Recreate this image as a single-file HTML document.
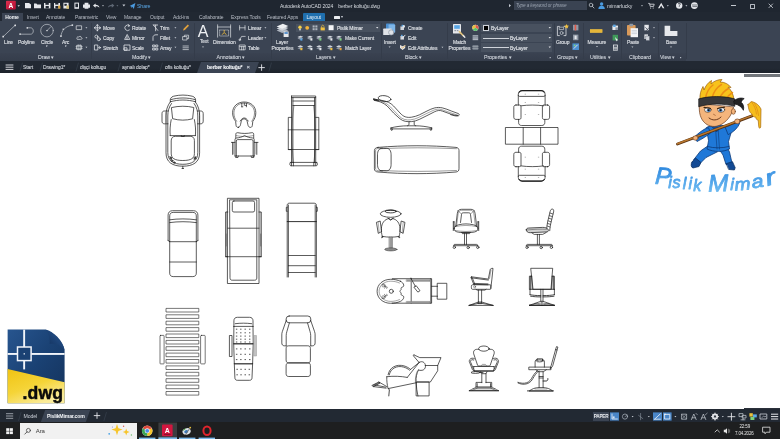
<!DOCTYPE html>
<html lang="tr">
<head>
<meta charset="utf-8">
<title>Autodesk AutoCAD 2024 - berber koltuğu.dwg</title>
<style>
html,body{margin:0;padding:0;background:#fff;}
body{width:780px;height:439px;overflow:hidden;position:relative;font-family:"Liberation Sans",sans-serif;}
#app{position:absolute;left:0;top:0;width:780px;height:439px;overflow:hidden;background:#fff;}
.abs{position:absolute;}
.t{position:absolute;white-space:nowrap;color:#d4d8de;font-size:5px;line-height:6px;letter-spacing:-0.1px;}
#titlebar{left:0;top:0;width:780px;height:12px;background:#1f2630;}
#tabrow{left:0;top:12px;width:780px;height:9px;background:#212832;}
#ribbon{left:0;top:21px;width:780px;height:40px;background:#3b4453;}
#ribbonlabels{left:0;top:53px;width:686px;height:8px;background:linear-gradient(#3a4251,#353d4b);}
#filetabs{left:0;top:61px;width:780px;height:12px;background:#222933;}
#canvas{left:0;top:73px;width:780px;height:336px;background:#fff;}
#layoutbar{left:0;top:409px;width:780px;height:13px;background:#222933;}
#taskbar{left:0;top:422px;width:780px;height:17px;background:#1e1f20;}
.sep{position:absolute;top:23px;width:1px;height:36px;background:#343c4a;}
.lbl{top:54px;color:#cdd2d9;font-size:5.3px;}
.tab{top:14px;color:#b9bec7;}
.ft{top:64px;color:#d0d4da;}
.rb{color:#dde0e5;-webkit-text-stroke:0.120px #dde0e5;}
.lbl,.ft{-webkit-text-stroke:0.100px currentColor;}
.t,svg{filter:blur(0.300px);}
#dw{filter:none;}
</style>
</head>
<body>
<div id="app">
<div id="titlebar" class="abs"></div>
<div id="tabrow" class="abs"></div>
<div id="ribbon" class="abs"></div>
<div id="ribbonlabels" class="abs"></div>
<div id="filetabs" class="abs"></div>
<div id="canvas" class="abs"></div>
<div id="layoutbar" class="abs"></div>
<div id="taskbar" class="abs"></div>

<!-- CHROME-TEXT -->
<div class="sep" style="left:91px;"></div><div class="sep" style="left:193.5px;"></div><div class="sep" style="left:270.5px;"></div><div class="sep" style="left:380.5px;"></div><div class="sep" style="left:446.5px;"></div><div class="sep" style="left:553.5px;"></div><div class="sep" style="left:583px;"></div><div class="sep" style="left:621px;"></div><div class="sep" style="left:658px;"></div><div class="sep" style="left:686px;"></div>
<div class="abs" style="left:744px;top:73.6px;width:36px;height:3.2px;background:#72767b;"></div>
<div class="abs" style="left:0;top:68px;width:780px;height:5px;background:linear-gradient(rgba(26,31,39,0),rgba(26,31,39,.7));"></div>
<!-- title bar text -->
<div class="t" style="left:137px;top:3px;color:#5aa7e6;font-size:5.2px;">Share</div>
<div class="t" style="left:280px;top:3px;color:#d8dce2;font-size:5px;">Autodesk AutoCAD 2024</div>
<div class="t" style="left:338.300px;top:3px;color:#d8dce2;font-size:5.100px;">berber koltuğu.dwg</div>
<div class="abs" style="left:514px;top:1px;width:73px;height:9px;background:#3a4352;"></div>
<div class="t" style="left:516px;top:3px;color:#9aa3b0;font-size:4.6px;font-style:italic;">Type a keyword or phrase</div>
<div class="t" style="left:607px;top:3px;color:#d8dce2;font-size:5.2px;">mimarlucky</div>
<div class="abs" style="left:731px;top:5.3px;width:4.6px;height:0.8px;background:#c4c8cf;"></div>
<svg class="abs" style="left:768px;top:3px;" width="6" height="6" viewBox="0 0 6 6"><path d="M0.700 0.700l4.200 4.200M4.900 0.700l-4.200 4.200" stroke="#d4d8de" stroke-width="0.800" fill="none"/></svg>
<div class="abs" style="left:750.3px;top:3.8px;width:2.8px;height:3px;border:0.6px solid #b4b9c1;border-radius:0.5px;"></div>

<!-- ribbon tabs -->
<div class="abs" style="left:2px;top:12.500px;width:21px;height:9.500px;background:#3b4453;"></div>
<div class="t tab" style="left:5.200px;color:#f2f4f7;font-weight:bold;font-size:5px;">Home</div>
<div class="t tab" style="left:27px;">Insert</div>
<div class="t tab" style="left:46px;">Annotate</div>
<div class="t tab" style="left:75px;">Parametric</div>
<div class="t tab" style="left:106px;">View</div>
<div class="t tab" style="left:124px;">Manage</div>
<div class="t tab" style="left:150px;">Output</div>
<div class="t tab" style="left:173px;">Add-ins</div>
<div class="t tab" style="left:199px;">Collaborate</div>
<div class="t tab" style="left:231px;">Express Tools</div>
<div class="t tab" style="left:267px;">Featured Apps</div>
<div class="abs" style="left:303px;top:12.5px;width:22px;height:8.5px;background:#1f6fae;border-radius:1px 1px 0 0;"></div>
<div class="t tab" style="left:306.5px;color:#eaf2fa;">Layout</div>
<div class="abs" style="left:334px;top:15.5px;width:6px;height:3px;background:#e8ebef;border-radius:0.5px;"></div>
<div class="t" style="left:341px;top:14px;font-size:4px;color:#cfd3da;">▾</div>

<!-- ribbon panel labels -->
<div class="t lbl" style="left:38px;">Draw ▾</div>
<div class="t lbl" style="left:132px;">Modify ▾</div>
<div class="t lbl" style="left:216.500px;">Annotation ▾</div>
<div class="t lbl" style="left:316px;">Layers ▾</div>
<div class="t lbl" style="left:405px;">Block ▾</div>
<div class="t lbl" style="left:484px;">Properties ▾</div>
<div class="t lbl" style="left:557px;">Groups ▾</div>
<div class="t lbl" style="left:590px;">Utilities ▾</div>
<div class="t lbl" style="left:629px;">Clipboard</div>
<div class="t lbl" style="left:660px;">View ▾</div>

<!-- ribbon button text : Draw -->
<div class="t rb" style="left:4px;top:38.8px;">Line</div>
<div class="t rb" style="left:18px;top:38.8px;">Polyline</div>
<div class="t rb" style="left:41px;top:38.8px;">Circle</div>
<div class="t rb" style="left:62px;top:38.8px;">Arc</div>
<div class="t rb" style="left:46px;top:43px;font-size:3px;">▾</div>
<div class="t rb" style="left:64.5px;top:43px;font-size:3px;">▾</div>
<!-- Modify -->
<div class="t rb" style="left:103px;top:24.5px;">Move</div>
<div class="t rb" style="left:103px;top:34.5px;">Copy</div>
<div class="t rb" style="left:103px;top:44.500px;">Stretch</div>
<div class="t rb" style="left:132px;top:24.5px;">Rotate</div>
<div class="t rb" style="left:132px;top:34.5px;">Mirror</div>
<div class="t rb" style="left:132px;top:44.500px;">Scale</div>
<div class="t rb" style="left:160px;top:24.5px;">Trim</div>
<div class="t rb" style="left:160px;top:34.5px;">Fillet</div>
<div class="t rb" style="left:160px;top:44.500px;">Array</div>
<!-- Annotation -->
<div class="t rb" style="left:200px;top:38.800px;font-size:4.800px;">Text</div>
<div class="t rb" style="left:213px;top:38.8px;">Dimension</div>
<div class="t rb" style="left:248px;top:24.5px;">Linear</div>
<div class="t rb" style="left:248px;top:34.5px;">Leader</div>
<div class="t rb" style="left:248px;top:44.500px;">Table</div>
<!-- Layers -->
<div class="t rb" style="left:276px;top:38.8px;">Layer</div>
<div class="t rb" style="left:271.5px;top:44.500px;">Properties</div>
<div class="abs" style="left:296px;top:23.5px;width:84px;height:8.5px;background:#48515f;"></div>
<div class="t rb" style="left:337px;top:24.5px;color:#e4e7eb;">Pislik Mimar</div>
<div class="t rb" style="left:345px;top:34.5px;">Make Current</div>
<div class="t rb" style="left:345px;top:44.500px;">Match Layer</div>
<!-- Block -->
<div class="t rb" style="left:384px;top:38.8px;">Insert</div>
<div class="t rb" style="left:408px;top:24.5px;">Create</div>
<div class="t rb" style="left:408px;top:34.5px;">Edit</div>
<div class="t rb" style="left:408px;top:44.500px;">Edit Attributes</div>
<!-- Properties -->
<div class="t rb" style="left:453px;top:38.8px;">Match</div>
<div class="t rb" style="left:448.5px;top:44.500px;">Properties</div>
<div class="abs" style="left:481px;top:23.5px;width:71px;height:8.5px;background:#48515f;"></div>
<div class="abs" style="left:481px;top:33.5px;width:71px;height:8.5px;background:#48515f;"></div>
<div class="abs" style="left:481px;top:43px;width:71px;height:8.5px;background:#48515f;"></div>
<div class="abs" style="left:483px;top:25px;width:5.5px;height:5.5px;background:#000;border:0.5px solid #cfd3da;box-sizing:border-box;"></div>
<div class="t rb" style="left:491px;top:24.5px;color:#e4e7eb;">ByLayer</div>
<div class="abs" style="left:483px;top:37.5px;width:26px;height:0.7px;background:#cfd3da;"></div>
<div class="t rb" style="left:510px;top:34.5px;color:#e4e7eb;">ByLayer</div>
<div class="abs" style="left:483px;top:47px;width:26px;height:0.7px;background:#cfd3da;"></div>
<div class="t rb" style="left:510px;top:44.500px;color:#e4e7eb;">ByLayer</div>
<!-- Groups / Utilities / Clipboard / View -->
<div class="t rb" style="left:556px;top:38.8px;">Group</div>
<div class="t rb" style="left:587.5px;top:38.8px;">Measure</div>
<div class="t rb" style="left:627px;top:38.8px;">Paste</div>
<div class="t rb" style="left:666px;top:38.8px;">Base</div>

<!-- file tabs -->
<div class="t ft" style="left:23px;">Start</div>
<div class="t ft" style="left:43px;">Drawing1*</div>
<div class="t ft" style="left:80px;">dişçi koltugu</div>
<div class="t ft" style="left:122px;">aynalı dolap*</div>
<div class="t ft" style="left:165px;">ofis koltuğu*</div>
<div class="abs" style="left:199px;top:62px;width:58px;height:11px;background:#3b4453;transform:skewX(-20deg);"></div>
<div class="t ft" style="left:207px;color:#f2f4f7;font-weight:bold;">berber koltuğu*</div>
<div class="t ft" style="left:246.5px;top:63.5px;font-size:6px;color:#c9ced6;">×</div>
<svg class="abs" style="left:257px;top:63px;" width="10" height="10" viewBox="0 0 10 10"><path d="M4.600 1.400v6.400M1.400 4.600h6.400" stroke="#e6e8ec" stroke-width="0.900" fill="none"/></svg>

<!-- layout bar text -->
<div class="t" style="left:23.5px;top:413px;color:#c9ced6;font-size:5.2px;">Model</div>
<div class="abs" style="left:43px;top:410px;width:45px;height:12px;background:#3b4453;transform:skewX(-20deg);"></div>
<div class="t" style="left:47px;top:413px;color:#f2f4f7;font-weight:bold;font-size:5.2px;letter-spacing:-0.2px;">PislikMimar.com</div>
<svg class="abs" style="left:92px;top:411px;" width="10" height="10" viewBox="0 0 10 10"><path d="M5 1.400v6.400M1.800 4.600h6.400" stroke="#e6e8ec" stroke-width="0.900" fill="none"/></svg>
<div class="abs" style="left:592.600px;top:412.400px;width:16.400px;height:8.200px;background:#3b4453;"></div>
<div class="t" style="left:593.800px;top:413.700px;font-size:4.700px;color:#eceef1;font-weight:bold;letter-spacing:-0.250px;">PAPER</div>

<!-- taskbar text -->
<div class="abs" style="left:19.5px;top:423px;width:117.5px;height:16px;background:#f1f1f1;"></div>
<div class="t" style="left:35.8px;top:428px;color:#3a3a3a;font-size:6px;">Ara</div>
<div class="t" style="left:739.5px;top:423.8px;color:#e6e6e6;font-size:4.5px;letter-spacing:-0.15px;">22:59</div>
<div class="t" style="left:735px;top:430.8px;color:#e6e6e6;font-size:4.5px;letter-spacing:-0.15px;">7.04.2026</div>
<div class="abs" style="left:744px;top:407.800px;width:36px;height:1.400px;background:#2b313b;"></div>
<!-- /CHROME-TEXT -->

<!-- CHROME-ICONS -->
<svg class="abs" style="left:0;top:0;" width="780" height="73" viewBox="0 0 780 73" fill="none" stroke-linecap="round" stroke-linejoin="round">
<!-- App logo -->
<defs>
<linearGradient id="gA" x1="0" y1="0" x2="1" y2="1"><stop offset="0" stop-color="#e0304f"/><stop offset="1" stop-color="#b10c33"/></linearGradient>
</defs>
<rect x="6" y="0.800" width="9.800" height="8.600" rx="0.800" fill="url(#gA)"/>
<text x="10.900" y="7.600" font-family="Liberation Sans, sans-serif" font-weight="bold" font-size="6.600" fill="#fff" text-anchor="middle">A</text>
<path d="M17.5 5.2h2.4l-1.2 1.5z" fill="#dfe2e7"/>
<!-- quick access -->
<g fill="#e6e8ec">
<path d="M25 3h4l2 1.6V8.2h-6z"/>
<path d="M34 3.6h2.4l.8.9H41V8.2h-7z"/>
<path d="M44 3h6.4v5.4H44z"/>
<path d="M54 3h6v5.4h-6z"/>
<path d="M63.4 2.8h5.2v5.8h-5.2z"/>
<path d="M74.4 2.6h4.6v6.2h-4.6z"/>
<path d="M83 4.4h7v3.4h-7zM84.6 2.8h3.8v1.6h-3.8zM84.6 7h3.8v1.8h-3.8z"/>
</g>
<g fill="#222933">
<rect x="45.4" y="3" width="3.4" height="1.8"/><rect x="45.6" y="6" width="3.2" height="2.4"/>
<rect x="55.2" y="3" width="3.2" height="1.6"/><rect x="55.4" y="6" width="3" height="2.4"/>
<rect x="75.4" y="3.6" width="2.6" height="3.6"/>
<rect x="64.4" y="3.8" width="2.4" height="2"/>
</g>
<rect x="58.2" y="5.6" width="2.2" height="3" fill="#d9a23a"/>
<rect x="66.4" y="5.4" width="2.6" height="3.4" fill="#d8c27a"/>
<path d="M93 5.6l2.6-2.2v1.4c2 0 3.6.8 3.8 3-1-1.2-2.2-1.5-3.8-1.5v1.5z" fill="#e6e8ec"/>
<path d="M102 5.2h2l-1 1.3z" fill="#c9ced6"/>
<path d="M114.4 5.6l-2.6-2.2v1.4c-2 0-3.6.8-3.8 3 1-1.2 2.2-1.5 3.8-1.5v1.5z" fill="#5f6875"/>
<path d="M116.4 5.2h2l-1 1.3z" fill="#6d7683"/>
<path d="M122.4 4.6h3l-1.5 2z" fill="#c9ced6"/>
<path d="M129.6 6l5.8-3-1.6 6-1.5-2.2-1 1.2v-1.6z" fill="#4b9be0"/>
<!-- search / user icons -->
<path d="M509 4l2 1.6-2 1.6z" fill="#c9ced6"/>
<circle cx="591" cy="5" r="1.8" stroke="#c9ced6" stroke-width="0.7"/><path d="M592.4 6.4l1.6 1.6" stroke="#c9ced6" stroke-width="0.8"/>
<circle cx="601.6" cy="4" r="1.7" fill="#4b9be0"/><path d="M598.4 9c0-2.4 1.4-3.2 3.2-3.2s3.2.8 3.2 3.2z" fill="#4b9be0"/>
<path d="M641 5.2h2l-1 1.3z" fill="#c9ced6"/>
<path d="M648.6 3.4h1l.6 3h3.4l.6-2.2h-4" stroke="#dfe2e7" stroke-width="0.8"/><circle cx="650.6" cy="8" r="0.6" fill="#dfe2e7"/><circle cx="653.2" cy="8" r="0.6" fill="#dfe2e7"/>
<path d="M658 8.2l3.2-5.4 3.2 5.4h-1.6l-1.6-2.8-1.6 2.8z" fill="#e6e8ec"/>
<path d="M666.8 5.2h2l-1 1.3z" fill="#c9ced6"/>
<circle cx="679.2" cy="5.6" r="3.2" fill="#e6e8ec"/>
<text x="679.2" y="7.4" font-family="Liberation Sans, sans-serif" font-weight="bold" font-size="5" fill="#222933" text-anchor="middle">?</text>
<path d="M685.4 5.2h2l-1 1.3z" fill="#c9ced6"/>
<circle cx="694.4" cy="5.6" r="3.4" fill="#e6e8ec"/><path d="M692.4 5h4.4M692.8 6.6h4" stroke="#222933" stroke-width="0.6"/>

<!-- DRAW panel -->
<g stroke="#c9cdd4" stroke-width="0.650">
<path d="M3.2 36.6L15 25.4"/>
<path d="M20 34.2h10.6c3.6 0 3.6-6.4 0-6.4h-3.4"/>
<circle cx="47" cy="30.6" r="6.3"/>
<path d="M47 30.6l4-4"/>
<path d="M61 36c.4-5.6 4.6-10 11.2-10.8"/>
</g>
<g fill="#dfe2e7">
<rect x="2.4" y="35.8" width="1.6" height="1.6"/><rect x="14.4" y="24.6" width="1.6" height="1.6"/>
<rect x="19.4" y="33.4" width="1.4" height="1.4"/><rect x="26.6" y="27.2" width="1.4" height="1.4"/>
<rect x="60.2" y="35.4" width="1.5" height="1.5"/><rect x="71.6" y="24.4" width="1.5" height="1.5"/><rect x="62.6" y="28.6" width="1.3" height="1.3"/>
<rect x="46.4" y="30" width="1.2" height="1.2"/>
</g>
<g stroke="#dfe2e7" stroke-width="0.7">
<rect x="76.6" y="25.8" width="5" height="3.8"/>
<path d="M77 39c-1-1.6 1-2.8 1.8-1.8.4-1.4 2.6-1 2.4.4 1.4.2 1 2-.2 1.8z"/>
<rect x="77" y="45.4" width="4.4" height="4"/><path d="M76 46.6h6.4M76 48.4h6.4M78.2 44.6v5.6M80.2 44.6v5.6" stroke-width="0.5"/>
</g>
<g fill="#c9ced6">
<path d="M85.4 27.2h2l-1 1.3zM85.4 37.2h2l-1 1.3zM85.4 46.8h2l-1 1.3z"/>
</g>

<!-- MODIFY panel icons -->
<g stroke="#dfe2e7" stroke-width="0.8">
<path d="M97.4 24.8v6M94.4 27.8h6M97.4 24.8l-1 1.1M97.4 24.8l1 1.1M97.4 30.8l-1-1.1M97.4 30.8l1-1.1M94.4 27.8l1.1-1M94.4 27.8l1.1 1M100.4 27.8l-1.1-1M100.4 27.8l-1.1 1"/>
<circle cx="96.4" cy="36.6" r="1.5"/><circle cx="98.8" cy="39.2" r="1.5"/>
<rect x="94.8" y="45" width="3" height="5"/><path d="M98.6 47.6h2M99.6 46.6l1 1-1 1"/>
<path d="M129.4 25.6a2.8 2.8 0 1 0 0 4.4M128.6 24.6l1 1.2-1.4.6"/>
<path d="M127 34.8l-2.4 4.6h4.8zM127 36.4v3"/>
<rect x="124.4" y="45" width="5.6" height="5.2"/><rect x="124.4" y="47.8" width="2.6" height="2.4"/>
<path d="M153.4 25l4.4 5.4M157.6 25h-4.2M155.6 25.2v5.6"/>
<path d="M153 40.4v-3c0-1.6 1.2-2.6 3-2.6h1.6"/>
<rect x="153" y="45" width="1.8" height="1.8"/><rect x="156" y="45" width="1.8" height="1.8"/><rect x="153" y="48.2" width="1.8" height="1.8"/><rect x="156" y="48.2" width="1.8" height="1.8"/>
</g>
<g fill="#c9ced6">
<path d="M174.4 27.2h2l-1 1.3zM174.4 37.2h2l-1 1.3zM174.4 46.8h2l-1 1.3z"/>
</g>
<path d="M183 30.4l.6-1.6 4.2-4.2 1.2 1.2-4.2 4.2z" fill="#e2a23c"/>
<g stroke="#dfe2e7" stroke-width="0.7">
<rect x="183" y="36.6" width="4" height="3.4"/><path d="M184.4 36.6v-1.4h4.2v3.4h-1.6"/>
<path d="M183 46h5.4M183 47.8h5.4M183 49.6h5.4"/>
</g>

<!-- ANNOTATION -->
<text x="203.200" y="36.800" font-family="Liberation Sans, sans-serif" font-size="16" fill="#eef0f3" text-anchor="middle">A</text>
<path d="M202 46.400h2l-1 1.300z" fill="#c9ced6"/>
<g stroke="#dfe2e7" stroke-width="0.7">
<path d="M217.6 24.8v12.4M230.6 24.8v12.4M217.6 27h13"/>
<rect x="219.6" y="30" width="9" height="6" stroke-dasharray="1 0.8" stroke-width="0.5"/>
</g>
<path d="M222.4 34.4l1.8-2 1.8 2M224.2 31.4v-1" stroke="#f0c040" stroke-width="0.9"/>
<g stroke="#dfe2e7" stroke-width="0.7">
<path d="M239.6 25.6v4.4M245 25.6v4.4M239.6 27.8h5.4"/>
<path d="M239.6 40l2-3.6h3.6"/><circle cx="239.8" cy="39.8" r="0.8"/>
<rect x="239.6" y="45" width="5.6" height="4.8"/><path d="M239.6 46.6h5.6M241.6 46.6v3.2M243.4 46.6v3.2"/>
</g>
<g fill="#c9ced6"><path d="M264.4 27.2h2l-1 1.3zM264.4 37.2h2l-1 1.3z"/></g>

<!-- LAYERS -->
<g>
<path d="M276.6 30.6l6.2-2.6 5.6 2.2-6.2 2.8z" fill="#aeb5bf"/>
<path d="M276.6 28.4l6.2-2.6 5.6 2.2-6.2 2.8z" fill="#cfd3da"/>
<path d="M276.6 26.4l6.2-2.6 5.6 2.2-6.2 2.8z" fill="#eef0f3"/>
<rect x="283.6" y="31.4" width="5" height="5.6" fill="#e6e8ec"/><rect x="284.4" y="32.2" width="3.4" height="1.6" fill="#3d7fc4"/>
</g>
<circle cx="300" cy="27.2" r="1.7" fill="#f3cf4a"/><rect x="299.2" y="28.8" width="1.6" height="1.6" fill="#cfd3da"/>
<circle cx="307.2" cy="27.8" r="1.9" fill="#f2b23a"/>
<rect x="312.6" y="25.4" width="4.8" height="4.8" fill="#aeb5bf"/><path d="M312.6 27.8h4.8M315 25.4v4.8" stroke="#3b4453" stroke-width="0.6"/>
<rect x="320.6" y="27.4" width="4.2" height="3" fill="#f0c040"/><path d="M321.6 27.4v-1c0-1.6 2.4-1.6 2.4 0" stroke="#f0c040" stroke-width="0.7"/>
<rect x="328.6" y="25.2" width="5" height="5" fill="#f4f5f7"/>
<path d="M376 27h2.4l-1.2 1.5z" fill="#dfe2e7"/>
<g fill="#cfd3da">
<path d="M297.4 37l3-1.3 2.8 1.1-3 1.4zM307 37l3-1.3 2.8 1.1-3 1.4zM316.2 37l3-1.3 2.8 1.1-3 1.4zM327 37l3-1.3 2.8 1.1-3 1.4zM336 37l3-1.3 2.8 1.1-3 1.4z"/>
<path d="M297.4 46.6l3-1.3 2.8 1.1-3 1.4zM307 46.6l3-1.3 2.8 1.1-3 1.4zM316.2 46.6l3-1.3 2.8 1.1-3 1.4zM327 46.6l3-1.3 2.8 1.1-3 1.4zM336 46.6l3-1.3 2.8 1.1-3 1.4z"/>
</g>
<g fill="#8f98a5">
<path d="M297.4 38.6l3-1.3 2.8 1.1-3 1.4zM307 38.6l3-1.3 2.8 1.1-3 1.4zM316.2 38.6l3-1.3 2.8 1.1-3 1.4zM327 38.6l3-1.3 2.8 1.1-3 1.4zM336 38.6l3-1.3 2.8 1.1-3 1.4z"/>
<path d="M297.4 48.2l3-1.3 2.8 1.1-3 1.4zM307 48.2l3-1.3 2.8 1.1-3 1.4zM316.2 48.2l3-1.3 2.8 1.1-3 1.4zM327 48.2l3-1.3 2.8 1.1-3 1.4zM336 48.2l3-1.3 2.8 1.1-3 1.4z"/>
</g>
<g>
<rect x="300.4" y="38.4" width="2" height="2.2" fill="#5aa7e6"/><rect x="310.4" y="38.4" width="2" height="2.2" fill="#e6e8ec"/>
<rect x="319.4" y="38.4" width="2" height="2.2" fill="#7bd07b"/><rect x="330.4" y="38.4" width="2" height="2.2" fill="#e6e8ec"/>
<rect x="300.4" y="48" width="2" height="2.2" fill="#f0c040"/><rect x="310.4" y="48" width="2" height="2.2" fill="#e6e8ec"/>
<rect x="319.4" y="48" width="2" height="2.2" fill="#e6e8ec"/><rect x="330.4" y="48" width="2" height="2.2" fill="#f0c040"/>
<rect x="339.6" y="38.4" width="2" height="2.2" fill="#7bd07b"/><rect x="339.6" y="48" width="2" height="2.2" fill="#e2a23c"/>
</g>

<!-- BLOCK -->
<g>
<rect x="386" y="23.6" width="8.6" height="9.4" rx="0.8" fill="#4b8fd0"/>
<rect x="388.6" y="24.6" width="6.6" height="8" rx="0.6" fill="#7db4e6"/>
<rect x="383.2" y="28.6" width="8.6" height="6.4" rx="0.6" fill="#dfe2e7"/>
<circle cx="391.2" cy="32.4" r="2.6" stroke="#8f98a5" stroke-width="0.7" fill="#dfe2e7"/>
<path d="M388.6 46.4h2l-1 1.3z" fill="#c9ced6"/>
</g>
<g>
<rect x="400.4" y="26.4" width="3.6" height="3.6" fill="#cfd3da"/><circle cx="403.6" cy="26.4" r="1.4" fill="#e6e8ec"/><rect x="401.6" y="24.8" width="1.6" height="1.6" fill="#5aa7e6"/>
<rect x="400.4" y="36" width="3.6" height="3.6" fill="#cfd3da"/><path d="M402 38.8l3-3.6" stroke="#e6e8ec" stroke-width="0.9"/><rect x="401" y="34.8" width="1.6" height="1.4" fill="#5aa7e6"/>
<path d="M400 45l2.6 1.2 2.6-1.2v3l-2.6 2-2.6-2z" fill="#e6e8ec"/><path d="M401.6 47.2l1 1 2.4-2.6" stroke="#e2a23c" stroke-width="0.8"/>
<path d="M441.4 46.8h2l-1 1.3z" fill="#c9ced6"/>
</g>

<!-- PROPERTIES -->
<g>
<rect x="453" y="24" width="8" height="9.6" rx="0.6" fill="#e6e8ec"/>
<rect x="454.2" y="25.2" width="5.6" height="3.6" fill="#5aa7e6"/>
<rect x="454.4" y="30" width="1.6" height="1.2" fill="#8f98a5"/><rect x="456.8" y="30" width="1.6" height="1.2" fill="#8f98a5"/>
<path d="M459.4 31.6l4.4 4.6" stroke="#e2c27a" stroke-width="1.6"/><path d="M463.2 35.6l1.6 1.6" stroke="#e6e8ec" stroke-width="1.4"/>
</g>
<circle cx="475.4" cy="27.8" r="3.1" fill="#e6e8ec"/>
<path d="M475.4 27.8V24.7a3.1 3.1 0 0 1 2.7 4.6z" fill="#e05a4a"/><path d="M475.4 27.8l2.7 1.5a3.1 3.1 0 0 1-5.4 0z" fill="#5ac46a"/><path d="M475.4 27.8l-2.7 1.5a3.1 3.1 0 0 1 2.7-4.6z" fill="#e8c23c"/>
<rect x="472.6" y="35.2" width="5.6" height="5" fill="#aeb5bf"/><path d="M472.6 36.6h5.6M472.6 38h5.6" stroke="#3b4453" stroke-width="0.4"/>
<rect x="472.6" y="45" width="5.6" height="5" fill="#6d7683"/><path d="M472.6 46.4h5.6M472.6 48.4h5.6" stroke="#cfd3da" stroke-width="0.4"/>
<g fill="#dfe2e7"><path d="M548.6 27h2.4l-1.2 1.5zM548.6 37h2.4l-1.2 1.5zM548.6 46.6h2.4l-1.2 1.5z"/></g>
<rect x="549.6" y="57" width="1.2" height="1.2" fill="#aeb5bf"/>

<!-- GROUPS -->
<g stroke="#dfe2e7" stroke-width="0.8">
<path d="M559.4 26.4h-2v9.2h2M564 26.4h2v9.2h-2"/>
<circle cx="561.6" cy="33" r="1.5" stroke-width="0.6"/><rect x="559.6" y="27.2" width="4" height="2.4" stroke-width="0.6"/>
</g>
<path d="M566.6 24l.7 1.6 1.7.2-1.3 1.1.4 1.7-1.5-.9-1.5.9.4-1.7-1.3-1.100 1.700-.2z" fill="#f0c040"/>
<g>
<rect x="573" y="24.8" width="5.4" height="5.6" fill="#8f98a5"/><rect x="574.6" y="24.800" width="1.600" height="5.600" fill="#e05a4a"/>
<rect x="573" y="34.6" width="5.4" height="5.6" fill="#8f98a5"/><rect x="574.600" y="35.600" width="2" height="3.600" fill="#e6e8ec"/>
<rect x="572.4" y="43.400" width="6.6" height="6.600" fill="#4b8fd0"/><path d="M574 48.400l3.400-3.400" stroke="#e6e8ec" stroke-width="0.900"/><circle cx="574.600" cy="45.400" r="0.9" fill="#7bd07b"/>
</g>

<!-- UTILITIES -->
<rect x="590" y="29.2" width="12.400" height="3.600" fill="#f0c040"/><path d="M590 31h12.400" stroke="#c79a20" stroke-width="0.5"/>
<path d="M596 46.400h2l-1 1.300z" fill="#c9ced6" transform="translate(0,-0.400) scale(1)"/>
<g>
<rect x="612.400" y="25.600" width="5.600" height="4.400" fill="#e6e8ec"/><rect x="613.200" y="24.600" width="2.400" height="2.400" fill="#5aa7e6"/><rect x="615.400" y="27.400" width="2.600" height="2.600" fill="#8f98a5"/>
<rect x="612.600" y="34.800" width="5.400" height="5.600" fill="#3f9a5a"/><path d="M615 37l3.200 3.200-1.400.2-.6 1.200z" fill="#e6e8ec"/>
<rect x="613" y="44.600" width="4.800" height="6" fill="#e6e8ec"/><rect x="613.800" y="45.400" width="3.200" height="1.400" fill="#3b4453"/><path d="M613.800 48h3.200M613.800 49.400h3.200" stroke="#3b4453" stroke-width="0.600" stroke-dasharray="0.8 0.4"/>
</g>

<!-- CLIPBOARD -->
<g>
<rect x="627" y="25" width="8.600" height="10.600" rx="0.8" fill="#d99a5a"/>
<rect x="629.400" y="23.800" width="3.800" height="2.400" rx="0.6" fill="#8f98a5"/>
<rect x="630.600" y="28.200" width="7.400" height="9" fill="#f4f5f7"/>
<path d="M632 30.400h4.600M632 32h4.600M632 33.600h4.600" stroke="#aeb5bf" stroke-width="0.500"/>
<path d="M631.400 46.400h2l-1 1.300z" fill="#c9ced6"/>
</g>
<g>
<rect x="644.400" y="24.800" width="4.400" height="5.600" fill="#e6e8ec"/><path d="M645.600 27.600l3.600 3.600M649.200 27.600l-3.600 3.600" stroke="#3b4453" stroke-width="0.700"/>
<rect x="644.400" y="34.400" width="3.600" height="4.600" fill="#e6e8ec"/><rect x="646" y="36" width="3.600" height="4.600" fill="#cfd3da" stroke="#3b4453" stroke-width="0.400"/>
<path d="M653 27.200h2l-1 1.300zM653 37.200h2l-1 1.300z" fill="#c9ced6"/>
</g>

<!-- VIEW -->
<path d="M664.600 25.800h5.600v5.200h7.200v5h-12.800z" fill="#e6e8ec"/>
<path d="M670 46.400h2l-1 1.300z" fill="#c9ced6"/>
<rect x="680" y="57" width="1.200" height="1.200" fill="#aeb5bf"/>

<!-- file tab hamburger -->
<path d="M6 65h7M6 67.200h7M6 69.400h7" stroke="#e6e8ec" stroke-width="0.9"/>
<g stroke="#3b4453" stroke-width="0.600">
<path d="M20 71l2.400-8M40 71l2.400-8M76 71l2.400-8M118 71l2.400-8M160 71l2.400-8M269 71l2.400-8"/>
</g>
</svg>
<svg class="abs" style="left:0;top:405px;" width="780" height="34" viewBox="0 405 780 34" fill="none" stroke-linecap="round" stroke-linejoin="round">
<!-- layout hamburger -->
<path d="M6.400 413.700h6.400M6.400 416h6.400M6.400 418.300h6.400" stroke="#c9ced6" stroke-width="0.700"/>
<path d="M18.600 420.500l2.400-8M104 420.500l2.400-8" stroke="#3b4453" stroke-width="0.600"/>
<!-- status icons -->
<rect x="610" y="412.400" width="9" height="8.200" fill="#4a86c8"/>
<path d="M612 414v5h5.400" stroke="#eef3f9" stroke-width="0.8"/><rect x="612.600" y="416.400" width="2" height="2" fill="#cfe0f3"/>
<circle cx="625" cy="416.600" r="2.600" stroke="#aeb5bf" stroke-width="0.7"/><path d="M625 416.600l2.400-1.400" stroke="#aeb5bf" stroke-width="0.600"/>
<path d="M631.600 416h2l-1 1.300z" fill="#c9ced6"/>
<path d="M640.600 413.400v6.400M638.600 415.400l4.200 3.200" stroke="#8f98a5" stroke-width="0.600"/>
<path d="M647.800 416h2l-1 1.300z" fill="#c9ced6"/>
<rect x="653" y="412.400" width="9" height="8.200" fill="#4a86c8"/>
<path d="M654.600 419.200l5.800-5.400M654.600 419.200h5.800" stroke="#eef3f9" stroke-width="0.8"/>
<rect x="663" y="412.400" width="8.600" height="8.200" fill="#4a86c8"/>
<rect x="665" y="414.400" width="4.800" height="4.600" stroke="#eef3f9" stroke-width="0.8"/><rect x="664.200" y="413.600" width="1.400" height="1.400" fill="#eef3f9"/>
<path d="M674.400 416h2l-1 1.300z" fill="#c9ced6"/>
<g stroke="#c9ced6" stroke-width="0.700">
<rect x="681.600" y="414.200" width="5" height="5" stroke-dasharray="1 0.700"/><path d="M682.400 415l3.400 3.400M685.800 415l-3.400 3.400" stroke-width="0.500"/>
<path d="M691.400 419.600l2.400-5.600 2.400 5.600M692.200 417.800h3.200"/><path d="M696 413.400l1.400 1.400" stroke-width="0.600"/>
<path d="M701 419.600l2.400-5.600 2.400 5.600M701.800 417.800h3.200"/><path d="M705.400 414.800l1.800-1.600" stroke-width="0.600"/>
</g>
<circle cx="715" cy="416.600" r="2.300" stroke="#e6e8ec" stroke-width="1.500"/><path d="M715 413v7.200M711.400 416.600h7.200M712.500 414.100l5 5M717.500 414.100l-5 5" stroke="#e6e8ec" stroke-width="0.9"/><circle cx="715" cy="416.600" r="1" fill="#222933"/>
<path d="M721.800 416h2l-1 1.300z" fill="#c9ced6"/>
<path d="M731.400 413.200v7M727.900 416.700h7" stroke="#e6e8ec" stroke-width="0.900"/>
<g stroke="#c9ced6" stroke-width="0.700">
<rect x="739.400" y="413.600" width="3.600" height="3"/><rect x="742.600" y="415.400" width="3.400" height="2.600"/><path d="M741 419.800h4M743 418v1.800"/>
</g>
<rect x="749.400" y="413.200" width="3.400" height="3.400" fill="#e8c23c"/><rect x="753" y="414.400" width="3.800" height="3" fill="#5aa7e6"/><rect x="750.400" y="417" width="4" height="3" fill="#7bd07b"/>
<rect x="760.400" y="414" width="6.400" height="5" stroke="#c9ced6" stroke-width="0.800"/><path d="M762 417.600l1.600-1.600 1.400 1 1-1" stroke="#c9ced6" stroke-width="0.600"/>
<path d="M771.400 414.200h6.400M771.400 416.600h6.400M771.400 419h6.400" stroke="#e6e8ec" stroke-width="1"/>

<!-- TASKBAR -->
<g fill="#f2f2f2">
<rect x="6.200" y="428.200" width="3.100" height="2.700"/><rect x="9.800" y="428.200" width="3.100" height="2.700"/>
<rect x="6.200" y="431.400" width="3.100" height="2.700"/><rect x="9.800" y="431.400" width="3.100" height="2.700"/>
</g>
<circle cx="28.400" cy="430.400" r="2" stroke="#3a3a3a" stroke-width="0.700"/><path d="M27 431.900l-2.200 2.200" stroke="#3a3a3a" stroke-width="0.800"/>
<!-- sparkle decorations -->
<path d="M117 424l1.400 4.200 4.200 1.400-4.200 1.400-1.400 4.200-1.400-4.200-4.200-1.400 4.200-1.400z" fill="#f7c52b"/>
<path d="M126.200 428.600l.9 2.500 2.500.900-2.500.900-.9 2.500-.9-2.500-2.500-.900 2.500-.900z" fill="#f7c52b"/>
<circle cx="109.200" cy="433.800" r="0.900" fill="#4aa3e6"/><circle cx="123.600" cy="426.200" r="0.700" fill="#e0564a"/><circle cx="131.400" cy="435" r="0.700" fill="#6fc26f"/><circle cx="112.400" cy="427" r="0.500" fill="#8a6fd0"/>
<!-- chrome -->
<circle cx="147.200" cy="430.800" r="5.300" fill="#e8e8e8"/>
<path d="M147.200 430.800L142.610 428.150A5.300 5.300 0 0 1 151.790 428.150z" fill="#de4a3c"/>
<path d="M147.200 430.800L151.790 428.150A5.300 5.300 0 0 1 147.200 436.100z" fill="#f6c52e"/>
<path d="M147.200 430.800L147.200 436.100A5.300 5.300 0 0 1 142.610 428.150z" fill="#3da655"/>
<circle cx="147.200" cy="430.800" r="2.500" fill="#f1f1f1"/><circle cx="147.200" cy="430.800" r="1.900" fill="#4a8bea"/>
<!-- autocad active -->
<rect x="158.400" y="422.600" width="18.600" height="16.400" fill="#3c3d3f"/>
<rect x="162" y="424.600" width="10.600" height="11.600" rx="0.900" fill="#d2163f"/>
<text x="167.300" y="432.600" font-family="Liberation Sans, sans-serif" font-weight="bold" font-size="7" fill="#fff" text-anchor="middle">A</text>
<rect x="164" y="433.800" width="6.600" height="1.200" fill="#8f0f2c"/>
<!-- paint-like icon -->
<ellipse cx="186.600" cy="431.400" rx="4.200" ry="3.200" fill="#dfe3e8" transform="rotate(-20 186.600 431.400)"/>
<ellipse cx="186.200" cy="431.600" rx="2" ry="1.500" fill="#3a78b8" transform="rotate(-20 186.200 431.600)"/>
<path d="M185.600 434.600l4.400-6.600" stroke="#6d6f73" stroke-width="0.900"/><circle cx="190.200" cy="427.600" r="0.900" fill="#e8c23c"/>
<path d="M183.400 430.200l2-1.400" stroke="#58a84e" stroke-width="1"/>
<!-- opera -->
<ellipse cx="207" cy="430.800" rx="3.600" ry="4.300" stroke="#e0242c" stroke-width="2"/>
<!-- underlines -->
<g fill="#7db9ea">
<rect x="139" y="437.600" width="16.400" height="1.400"/><rect x="158.400" y="437.400" width="18.600" height="1.600"/><rect x="179" y="437.600" width="16.400" height="1.400"/><rect x="198.600" y="437.600" width="16.400" height="1.400"/>
</g>
<!-- tray -->
<path d="M715 432l2.200-2.200 2.200 2.200" stroke="#e6e6e6" stroke-width="0.800"/>
<path d="M723.800 429.800h1.400l1.800-1.600v5.600l-1.800-1.600h-1.400z" fill="#e6e6e6"/><path d="M728.400 429.200v3.600M729.600 429.800v2.400" stroke="#bdbdbd" stroke-width="0.500"/>
<path d="M763 427.200h7v5h-3.600l-1.400 1.600v-1.600h-2z" stroke="#e6e6e6" stroke-width="0.800"/>
</svg>
<!-- /CHROME-ICONS -->

<!-- DRAWINGS -->
<svg id="dw" class="abs" style="left:0;top:73px;" width="780" height="336" viewBox="0 73 780 336" fill="none" stroke="#1c1c1c" stroke-width="0.720" stroke-linecap="round" stroke-linejoin="round">
<!-- 1: barber chair top view (car-like) -->
<g>
<path d="M170.300 101.800c-.6-3 .8-5 3.400-5.600 6-1.500 12.500-1.500 18.500 0 2.600.6 4 2.600 3.400 5.600"/>
<path d="M171 99.600c7.500-2.200 16.500-2.200 24 0M170.300 101.800c8-2.400 17.300-2.400 25.300 0"/>
<path d="M170.300 101.800c-3 4-4.300 8.500-4.300 14v37c0 9.500 6.500 13.400 16.800 13.400s16.800-3.900 16.800-13.400v-37c0-5.500-1.300-10-4.300-14"/>
<path d="M171.500 103.500c-2.600 3.600-3.700 7.600-3.700 12.500v36.500c0 8.300 5.600 11.800 15 11.800s15-3.500 15-11.800V116c0-4.900-1.100-8.900-3.700-12.500"/>
<path d="M168 111h-3.600c-1.500 0-2.400 1-2.400 2.600v7.600c0 1.600.9 2.600 2.400 2.600h3.600M197.600 111h3.200c1.500 0 2.400 1 2.400 2.600v7.600c0 1.600-.9 2.600-2.400 2.600h-3.200"/>
<path d="M166 112.500v10M199.600 112.500v10" stroke-width="0.400"/>
<path d="M171.800 107.500c7-1.700 15-1.700 22 0l-1.200 11.300c-6.500 1.800-13.100 1.800-19.600 0z"/>
<path d="M170.200 135.600h25.200M170.200 135.600c-.4-5-.2-10 1-16M195.400 135.600c.4-5 .2-10-1-16"/>
<path d="M171.200 140.500c0-2.600 1.600-4.200 4.200-4.200h14.800c2.600 0 4.200 1.600 4.200 4.200v13c0 4.700-3 7-11.600 7s-11.600-2.300-11.600-7z"/>
<path d="M181.300 135.600v.9h3v-.9"/>
<path d="M169.800 156.500l1.800 3.500M195.800 156.500l-1.800 3.500"/>
<circle cx="170.800" cy="158" r="0.900"/><circle cx="172" cy="160.700" r="0.900"/><circle cx="174.200" cy="162.500" r="0.800"/>
<circle cx="194.800" cy="158" r="0.900"/>
<path d="M182.800 166.200v2.300M182 168.500h1.600"/>
</g>
<!-- 2a: wash basin -->
<g>
<path d="M238.600 127.300c-1.200.4-2.300-.3-2.500-1.700l-.5-4.300c-2-2.400-3-5.400-3-8.600 0-6.400 5-10.700 11.600-10.700s11.600 4.300 11.600 10.700c0 3.200-1 6.200-3 8.600l-.5 4.300c-.2 1.400-1.300 2.100-2.500 1.700-1.200-.4-1.700-1.400-1.900-2.600l-.8-3.600c-.6-1.600-1.700-2.200-2.900-2.200s-2.300.6-2.900 2.200l-.8 3.600c-.2 1.200-.7 2.200-1.900 2.600z"/>
<path d="M236.600 121.200c-1.800-2.400-2.700-5.200-2.700-8.300 0-5.700 4.400-9.800 10.300-9.800s10.300 4.100 10.300 9.800c0 3.100-.9 5.900-2.700 8.300" stroke-width="0.500"/>
<path d="M241.800 103.200v3.600M244.300 103v2.400M246.400 103.200v3.600M241.800 106.800h1M246.400 105.500h-.9"/>
<path d="M240.200 121c1.400-2.200 2.600-3 4-3s2.600.8 4 3"/>
</g>
<!-- 2b: small chair front -->
<g>
<path d="M235.800 138v-3.600c0-1.200.7-1.900 1.900-1.700 4.700 1 9.400 1 14.100 0 1.200-.2 1.900.5 1.900 1.700v3.600"/>
<path d="M236.400 135.600c5.500 1.300 11.100 1.300 16.600 0" stroke-width="0.400"/>
<path d="M235 156v-16.400c0-1 .6-1.500 1.600-1.600 2.900-.3 5.200-.9 7.200-2.100.5-.5 1.100-.5 1.600 0 2 1.200 4.300 1.800 7.200 2.100 1 .1 1.600.600 1.600 1.600V156"/>
<path d="M236.300 156v-15c0-.9.500-1.400 1.400-1.400h14c.9 0 1.400.500 1.400 1.400v15"/>
<path d="M235 156h19.400M236.200 156l-.6 1.500h2.400l.3-1.500M253.200 156l.6 1.500h-2.400l-.3-1.500"/>
<path d="M231.400 142.400h3.600M254.400 142.400h3.600M232.600 142.400v12M256.800 142.400v12" />
<path d="M233.600 142.400v11.600M255.800 142.400v11.600" stroke-width="0.350"/>
</g>
<!-- 3: chair top view with frame -->
<g>
<path d="M291.500 96h24.200v69.400M291.500 96v69.400"/>
<path d="M291.500 97.600h24.200M292.900 101h21.500M292.900 105.500h21.500"/>
<path d="M292.900 97.600v65M314.500 97.600v65"/>
<path d="M294 105.500c-2.600 14-2.600 43-.4 57M313.400 105.500c2.600 14 2.600 43 .4 57" stroke-width="0.400"/>
<path d="M291.500 117.400h-3.200v32.200h3.200M315.700 117.400h3.100v32.200h-3.100"/>
<path d="M288.300 129.800h30.500M288.300 149.500h30.500" stroke-width="0.700"/>
<path d="M290.200 162.400h26.800M291 165.800h25.200c1.700 0 1.700-3.400 0-3.400M291 165.800c-1.700 0-1.700-3.400 0-3.400"/>
<path d="M293.400 162.400v3.400M313.800 162.400v3.400"/>
</g>
<!-- 4: chair top view -->
<g>
<path d="M168.100 240.600v-25.500c0-2.700 1.700-4.400 4.400-4.400h21c2.700 0 4.400 1.700 4.400 4.400v25.500"/>
<path d="M169.700 241.600v-25.700c0-2.200 1.300-3.500 3.500-3.500h19.600c2.200 0 3.500 1.300 3.500 3.500v25.700"/>
<path d="M168.100 240.600l1.600 1M197.900 240.600l-1.600 1"/>
<path d="M169.700 219.800c8.500-1.200 18-1.200 26.600 0M169.700 222.600c8.500-1.200 18-1.200 26.600 0"/>
<path d="M169.700 241.700h26.600M169.700 262h26.600"/>
<path d="M169.700 241.700v31.400c0 2.200 1.300 3.500 3.500 3.500h19.600c2.200 0 3.500-1.300 3.500-3.500v-31.400"/>
</g>
<!-- 5: lounge chair top view -->
<g>
<rect x="227.800" y="198.300" width="31.200" height="85.200"/>
<path d="M230 199.800h26.800v78.200c0 1.400-.8 2.200-2.200 2.200h-22.400c-1.400 0-2.200-.8-2.200-2.200z"/>
<rect x="232.300" y="201" width="22.300" height="11" rx="1.600"/>
<path d="M227.800 212h-2.200v44.700h2.200M259 212h2.300v44.700H259"/>
<path d="M226.700 212v44.700M260.200 212v44.700" stroke-width="0.350"/>
<path d="M227.800 228.200h31.200M225.600 256.700h35.700" stroke-width="0.700"/>
<path d="M226.100 234v12M260.800 234v12" stroke-width="0.900" stroke="#666"/>
</g>
<!-- 6: tall chair frame -->
<g>
<path d="M287.200 277v-71.600c0-1.400.8-2.200 2.200-2.200h24.800c1.400 0 2.200.8 2.200 2.200V277"/>
<path d="M288.400 277v-72M315.200 277v-72"/>
<path d="M287.200 207.300h-.9v4h.9M316.400 207.300h.9v4h-.9"/>
<path d="M287.200 221.600h29.200" stroke-width="0.900"/>
<path d="M288.400 255.500h26.800M288.400 265.700h26.800M288.400 272.500h26.800"/>
</g>
<!-- 7: slatted chair -->
<g stroke-width="0.600">
<rect x="166.400" y="308.400" width="32.400" height="3.600"/>
<rect x="166.400" y="314.800" width="32.400" height="3.600"/>
<rect x="166.400" y="321.200" width="32.400" height="3.600"/>
<rect x="166.400" y="327.600" width="32.400" height="3.600"/>
<rect x="166.400" y="334" width="32.400" height="3.600"/>
<rect x="166.400" y="340.400" width="32.400" height="3.600"/>
<rect x="166.400" y="346.700" width="32.400" height="3.600"/>
<rect x="166.400" y="353.100" width="32.400" height="3.600"/>
<rect x="166.400" y="359.500" width="32.400" height="3.600"/>
<rect x="166.400" y="365.900" width="32.400" height="3.600"/>
<rect x="166.400" y="372.300" width="32.400" height="3.600"/>
<rect x="166.400" y="378.700" width="32.400" height="3.600"/>
<rect x="166.400" y="385.100" width="32.400" height="3.600"/>
<rect x="166.400" y="391.500" width="32.400" height="3.600"/>
<rect x="160" y="335.400" width="4.100" height="28.500" rx="0.600"/>
<rect x="200.600" y="335.400" width="4.600" height="28.500" rx="0.800"/>
</g>
<!-- 8: massage chair top view -->
<g>
<path d="M233.900 326.400v-5.600c0-2.200 1.300-3.500 3.500-3.500h12.100c2.200 0 3.500 1.300 3.500 3.500v5.600"/>
<path d="M235.200 323.700c5.500-.7 11-.7 16.500 0"/>
<path d="M233.900 326.400h19.100M233.900 326.400l-.2 17.400h19.500l-.2-17.400"/>
<path d="M233.700 343.800h19.500" stroke-width="0.800"/>
<path d="M233.700 343.800l.6 20h18.300l.6-20M234.300 363.800h18.300" />
<path d="M234.300 363.800l.6 14c0 1.600.9 2.500 2.500 2.500h12.100c1.600 0 2.500-.9 2.500-2.500l.6-14"/>
<rect x="229.800" y="335.500" width="2.200" height="21"/>
<rect x="254" y="335.500" width="2.500" height="20.500" fill="#c2c2c2" stroke="#999" stroke-width="0.500"/>
<g stroke="#444" stroke-width="0.900">
<path d="M236.300 329.200h.6M240.500 329.200h.6M244.900 329.200h.6M249.400 329.200h.6M236.300 332.800h.6M240.500 332.800h.6M244.900 332.800h.6M249.400 332.800h.6M236.300 336.100h.6M240.500 336.100h.6M244.900 336.100h.6M249.400 336.100h.6M236.300 339.200h.6M240.500 339.200h.6M244.900 339.200h.6M249.400 339.200h.6M236.300 342h.6M240.500 342h.6M244.900 342h.6M249.400 342h.6"/>
<path d="M236.300 348.900h.7M240.500 348.900h.7M244.900 348.900h.7M249.400 348.900h.7M236.300 354.300h.7M240.500 354.300h.7M244.900 354.300h.7M249.400 354.300h.7M236.300 359.600h.7M240.500 359.600h.7M244.900 359.600h.7M249.400 359.600h.7"/>
<path d="M236.800 369.300h.7M240.700 369.300h.7M244.900 369.300h.7M249 369.300h.7M236.800 374.800h.7M240.700 374.800h.7M244.900 374.800h.7M249 374.800h.7"/>
</g>
</g>
<!-- 9: armchair top view -->
<g>
<rect x="286.100" y="316" width="24.700" height="6.800" rx="3"/>
<path d="M286.300 320.200l-4 11.500c-.4 1.200-.5 2-.5 3.200v8c0 1.800.9 2.800 2.400 2.900l1.900.1"/>
<path d="M289.400 322.800l-2.600 9c-.4 1.400-.6 2.400-.6 3.800v10.200"/>
<path d="M310.600 320.200l4 11.500c.4 1.200.5 2 .5 3.200v8c0 1.800-.9 2.800-2.400 2.900l-1.900.1"/>
<path d="M307.500 322.800l2.600 9c.4 1.400.6 2.400.6 3.800v10.200"/>
<path d="M286.100 348.400c0-1.700.9-2.600 2.600-2.600h19.100c1.700 0 2.600.9 2.600 2.600v11.900c0 1.700-.9 2.600-2.600 2.600h-19.100c-1.700 0-2.600-.9-2.600-2.600z"/>
<path d="M286.100 365.500c0-1.700.9-2.600 2.600-2.600h19.100c1.700 0 2.600.9 2.600 2.600v8.400c0 1.700-.9 2.600-2.600 2.600h-19.100c-1.700 0-2.600-.9-2.600-2.600z"/>
</g>
<!-- DRAW2 -->
<!-- 10: lounge chair side view -->
<g>
<path d="M373.800 99.300c2.600.2 5 .5 7 .9 3 .5 5.500 1.100 7.700 2.100 2 1 3.600 2.200 5.100 3.700l6.400 7c1.700 1.800 3.300 3.100 5.200 3.800 2 .7 4.200.700 6.400.4 2.600-.4 5.100-1.200 7.700-2.300l7.700-3.900c2.500-1.300 5-2.400 7.700-3.100 2.600-.6 5.100-.6 7.700 0 3 .7 6 1.900 8.900 3.100l7.100 2.600c1 .5 1.200 1.600.2 2.100-2 .7-4.500.1-8-1.100"/>
<path d="M374.400 100.400c2.300.4 4.400.9 6.400 1.700 2.400 1 4.500 2.200 6.400 3.900l6.400 7 6.400 5.800c1.600 1.300 3.300 2.100 5.200 2.500 2.100.4 4.200.5 6.400.3 2.700-.3 5.200-1 7.700-2.200l7.700-3.800 7.700-3.900c2.500-1.200 5-1.700 7.700-.6l8.900 3.200c2.400.8 4.500 1.200 6.400 1.300"/>
<path d="M374.100 99.900c2.400.3 4.600.7 6.700 1.300 2.700.8 5 1.900 7 3.400 1.900 1.400 3.500 3.100 5 4.900l6.400 6.600c1.600 1.600 3.300 2.700 5.200 3.300 2 .6 4.200.7 6.400.4 2.600-.3 5.200-1.100 7.700-2.300l7.700-3.800 7.700-3.600c2.500-1 5-1.300 7.700-.5l8.900 3.100 7 2.400" stroke-width="0.400"/>
<ellipse cx="384.600" cy="98.600" rx="6.400" ry="2.900" transform="rotate(8 384.600 98.600)"/>
<path d="M373.600 98.700l5 1.600M373.400 99.600l4.600 1.400" stroke-width="0.800"/>
<path d="M409 121.600v2.400c0 1-.5 1.600-1.500 1.800M414.200 121.600v2.400c0 1 .5 1.600 1.500 1.800"/>
<path d="M391 127.800c5-1.200 11-2 16.500-2h8.200c5.500 0 11 .8 16 2M391 128.900h40.700M391 127.800v1.100M431.700 127.800v1.100"/>
<path d="M391 128.900v1c0 .6 1.400.6 1.400 0v-1M430.200 128.900v1c0 .6 1.400.6 1.400 0v-1" stroke-width="0.700"/>
</g>
<!-- 11: lounge top view -->
<g>
<path d="M378 147.400c26-2.200 52-2.200 78 0 1.900.2 3 1.300 3 3.200v18.200c0 1.900-1.100 3-3 3.200-26 2.200-52 2.200-78 0-2.300-.2-3.600-1.300-3.600-3.200v-18.200c0-1.900 1.300-3 3.600-3.200z"/>
<path d="M380 148.700c25-1.200 50-1.200 76.500 0M380 170.500c25 1.200 50 1.200 76.500 0" stroke-width="0.450"/>
<path d="M384 148.300h2.500c3 0 4.600 2.500 4.600 6.500v9.500c0 4-1.600 6.500-4.600 6.500H382c-3 0-4.500-2.500-4.500-6.500v-9.500c0-4 1.500-6.500 4.500-6.500z"/>
<path d="M375.600 150v19M376.500 149c2-1 4-1.200 6-.9M376.500 170.200c2 1 4 1.200 6 .9" stroke-width="0.450"/>
</g>
<!-- 12: double chairs + table top view -->
<g>
<path d="M518.300 105.200V94.400c0-2.400 1.400-3.800 3.800-3.800h19.200c2.400 0 3.800 1.400 3.800 3.800v10.800M518.600 119.400v3.100c0 1.900 1.100 3 3 3h20.200c1.900 0 3-1.100 3-3v-3.100"/>
<path d="M519.200 92.200c.8-1 1.700-1.600 2.900-1.600h19.200c1.200 0 2.100.6 2.900 1.600" stroke-width="1.100"/>
<path d="M518.300 95.200c0 .8.400 1.200 1.200 1.200h24.400c.8 0 1.200-.4 1.200-1.200"/>
<path d="M521 105.800c7.400-1 15.200-1 22.600 0"/>
<path d="M516 105h3.200c1.200 0 1.800.6 1.800 1.800v10.800c0 1.200-.6 1.800-1.800 1.800H516c-1.400 0-2.200-.8-2.200-2.200v-10c0-1.400.8-2.200 2.200-2.200zM547.400 105h-3.200c-1.200 0-1.800.6-1.800 1.800v10.800c0 1.200.6 1.800 1.800 1.800h3.200c1.400 0 2.200-.8 2.200-2.200v-10c0-1.400-.8-2.200-2.200-2.200z"/>
<path d="M525.100 94.200h.5M538.300 94.200h.5M525.100 102.500h.5M538.300 102.500h.5M525.100 114.500h.5M538.300 114.500h.5" stroke="#888" stroke-width="0.600"/>
<rect x="505.800" y="127.500" width="52.200" height="16.700"/>
<path d="M523.200 127.500v16.700M540.600 127.500v16.700"/>
<g transform="translate(0,271.700) scale(1,-1)">
<path d="M518.300 105.200V94.400c0-2.400 1.400-3.800 3.800-3.800h19.200c2.400 0 3.800 1.400 3.800 3.800v10.800M518.600 119.400v3.100c0 1.900 1.100 3 3 3h20.200c1.900 0 3-1.100 3-3v-3.100"/>
<path d="M519.200 92.200c.8-1 1.700-1.600 2.900-1.600h19.200c1.200 0 2.100.6 2.900 1.600" stroke-width="1.100"/>
<path d="M518.300 95.200c0 .8.400 1.200 1.200 1.200h24.400c.8 0 1.200-.4 1.200-1.200"/>
<path d="M521 105.800c7.400-1 15.200-1 22.600 0"/>
<path d="M516 105h3.200c1.200 0 1.800.6 1.800 1.800v10.800c0 1.200-.6 1.800-1.800 1.800H516c-1.400 0-2.200-.8-2.200-2.200v-10c0-1.400.8-2.200 2.200-2.200zM547.400 105h-3.200c-1.200 0-1.800.6-1.800 1.800v10.800c0 1.200.6 1.800 1.800 1.800h3.200c1.400 0 2.200-.8 2.200-2.200v-10c0-1.400-.8-2.200-2.200-2.200z"/>
<path d="M525.100 94.200h.5M538.300 94.200h.5M525.100 102.500h.5M538.300 102.500h.5M525.100 114.500h.5M538.300 114.500h.5" stroke="#888" stroke-width="0.600"/>
</g>
</g>
<!-- 13: barber chair front -->
<g>
<ellipse cx="390.700" cy="213.800" rx="10.400" ry="3.500"/>
<ellipse cx="390.700" cy="211.400" rx="5.600" ry="1.500" stroke-width="0.800"/>
<path d="M386 210.800c3-.8 6.400-.8 9.400 0" stroke-width="0.400"/>
<path d="M382.300 236.400c-1.600-5.500-1.300-11 1.200-14.500 1.500-2 3.500-3 5.500-3.400l1.700 1.300 1.700-1.300c2 .4 4 1.400 5.500 3.400 2.500 3.500 2.800 9 1.200 14.500-5.600 1-11.200 1-16.800 0z"/>
<path d="M388 218.200l2.700 1.800 2.700-1.800" stroke-width="0.800"/>
<path d="M382.300 236.400l-.7 1.400 1.600-.9M399.100 236.400l.7 1.400-1.600-.9" stroke-width="0.700"/>
<path d="M376.800 222.200l3.400-1.200 1.400 10.600-3 1.600zM404.600 222.200l-3.400-1.200-1.400 10.600 3 1.600z"/>
<path d="M378.200 222.400l1 10M403.200 222.400l-1 10" stroke-width="0.350"/>
<rect x="389.400" y="237" width="3" height="11.200" fill="#9c9c9c" stroke="#555" stroke-width="0.500"/>
<ellipse cx="390.900" cy="249.400" rx="6.200" ry="1.500" fill="#8a8a8a" stroke="#444" stroke-width="0.600"/>
</g>
<!-- 14: office chair front -->
<g>
<path d="M455.700 226.500l1.600-13c.4-2.800 1.500-4.200 4.200-4.200h9.400c2.700 0 3.800 1.400 4.200 4.200l1.600 13"/>
<path d="M456.600 226l1.500-12c.3-2.400 1.300-3.700 3.600-3.700h8.600c2.300 0 3.300 1.300 3.600 3.700l1.500 12" stroke-width="0.400"/>
<path d="M460.500 222.500l1-8c.2-1.200.7-1.700 1.800-1.700h5.400c1.100 0 1.600.5 1.800 1.700l1 8"/>
<path d="M457.500 210.600l4 3.300M474.500 210.600l-4 3.300" stroke-width="0.400"/>
<path d="M454 228.800c0-2 2-3.400 4.500-4 5-1.200 10-1.200 15 0 2.500.6 4.500 2 4.500 4 0 2.200-2.400 3.300-6 3.600h-12c-3.600-.3-6-1.400-6-3.600z"/>
<path d="M455 226.700c7-1.700 15-1.700 22 0M455 230.500c7 1.300 15 1.300 22 0" stroke-width="0.400"/>
<path d="M453.300 221.800v8.800M454.100 221.800v7M453.300 221.800h.8M478.700 221.800v8.800M477.900 221.800v7M478.700 221.800h-.8"/>
<path d="M461.500 232.600h9M462.500 233.600h7" />
<path d="M464.500 233.600v10.800M466.500 233.600v10.800"/>
<path d="M453.600 245.700c0-1 .5-1.300 1.400-1.300h21.400c.9 0 1.400.3 1.400 1.300M454.200 245.700h23.400" />
<circle cx="454.300" cy="247.300" r="1.200"/><circle cx="468.200" cy="247.500" r="1.200"/><circle cx="477.800" cy="247.300" r="1.200"/>
</g>
<!-- 15: office chair side -->
<g>
<path d="M546.600 230.500c.2-3 .4-5.500 1-8.500l2.600-10.700c.4-1.600 1.200-2.400 2.400-2.200 1 .2 1.300 1.200 1 2.800l-2.700 11c-.6 2.600-1 5-1.200 7.800"/>
<path d="M549.900 213l3 1M549.300 215.600l3 1M548.700 218.200l3 1M548.100 220.800l3 1M547.500 223.400l3 1M547.100 226l3 1" stroke-width="0.800" stroke="#444"/>
<path d="M526.300 229.800c0-1 .8-1.700 2.400-1.800l14-.6c2.400-.1 4.400.6 5.400 2 .6.900.3 2.300-1 2.500l-17 .8c-2.400.1-3.800-1.200-3.800-2.900z" fill="#d2d2d2"/>
<path d="M527.200 230c6.500-.8 13.500-1 20-.7" stroke-width="0.400"/>
<path d="M531.800 232.800l2.400 1.600h8.500l3.500-1.900"/>
<path d="M537.400 234.400v10M539.400 234.400v10"/>
<path d="M526.300 245.700c0-1 .5-1.300 1.400-1.300h23.400c.9 0 1.400.3 1.400 1.300M526.900 245.700h25" />
<circle cx="527" cy="247.300" r="1.200"/><circle cx="541.200" cy="247.500" r="1.200"/><circle cx="551.400" cy="247.300" r="1.200"/>
</g>
<!-- 16: shampoo unit top view -->
<g>
<path d="M392.300 278.700h39.300v24.500h-39.300M411.200 278.200v25M430.800 278.700v24.500"/>
<path d="M400.500 281.300c-3-1.400-6.400-2-9.800-2-7.600 0-13.600 5-13.600 12s6 12 13.600 12c3.400 0 6.800-.6 9.800-2 1.800-.9 3-2.200 3.200-3.700.2-1.200-.4-1.900-1.400-2.100-.9-.2-1.400-.8-1.200-1.500.2-.6.100-1.100-.5-1.600-.9-.7-.9-1.500 0-2.200.6-.5.700-1 .5-1.600-.2-.7.300-1.300 1.200-1.500 1-.2 1.600-.9 1.400-2.100-.2-1.500-1.400-2.800-3.200-3.700z"/>
<path d="M399.500 283c-2.700-1.200-5.700-1.800-8.700-1.800-6.500 0-11.700 4.300-11.700 10.100s5.200 10.100 11.700 10.100c3 0 6-.6 8.700-1.800" stroke-width="0.400"/>
<circle cx="391.300" cy="291.300" r="2"/>
<path d="M382 284.200c1.400-.8 3-.2 3.500 1.200.4 1.200-.1 2.300-1.100 2.900M384.500 286.500l2.800.6-.6 1.300" stroke-width="0.500"/>
<path d="M382 298.400c1.400.8 3 .2 3.500-1.200.4-1.200-.1-2.300-1.100-2.900M384.500 296.100l2.800-.6-.6-1.300" stroke-width="0.500"/>
<circle cx="383.200" cy="285.800" r="1.200" stroke-width="0.400"/><circle cx="383.200" cy="296.800" r="1.200" stroke-width="0.400"/>
<rect x="406.500" y="279.600" width="23.500" height="1.800" fill="#9a9a9a" stroke="#777" stroke-width="0.400"/>
<rect x="406.500" y="301.400" width="23.500" height="1.800" fill="#9a9a9a" stroke="#777" stroke-width="0.400"/>
<path d="M410.800 278.200l4.600 8.200"/>
<path d="M414.200 286.900l2-1.200 3.800 5-1.800 1.200z"/>
<path d="M431.600 286.300h6M431.600 296.200h6"/>
<rect x="437.600" y="283.300" width="9.200" height="15.900"/>
</g>
<!-- 17: salon chair side -->
<g>
<path d="M488.500 278.200l1.700-8.600c.2-.9.700-1.200 2.800-1.300l-1.100 10.800-1.100 9.200"/>
<path d="M489.500 278.500l1.500-8.500" stroke-width="0.400"/>
<path d="M471.400 276.800l17.100 2.300M471.200 277.800l17.100 2.300M471.400 276.800l-.2 1"/>
<path d="M471.200 277.800l2.500 6.500M472.400 277.900l2.300 6.200"/>
<path d="M473.700 284.300l14.200.5M474 283.400l14 .5"/>
<path d="M471.400 286c0-.8.400-1.200 1.200-1.200h17.600c.4 0 .6.200.6.600v3.300c0 .4-.2.600-.6.600h-17.600c-.8 0-1.200-.4-1.200-1.200z"/>
<circle cx="474.600" cy="286.800" r="1" stroke-width="0.400"/>
<path d="M476 289.300l1 .8h8l1-.8"/>
<path d="M478.400 290.100v12M481.600 290.100v12"/>
<path d="M469.100 305.400l9.300-3.400M480 303l-10.900 2.400M493 305.400l-11.400-3.400M480 303l13 2.400M469.100 305.400h24"/>
<path d="M478.400 302h3.200v1.600h-3.200z"/>
</g>
<!-- 18: salon chair front -->
<g>
<path d="M531.100 268.300h21.600l-1.700 21h-17.600z"/>
<path d="M529.400 289.300v-13.100h2.300M532.200 289.300l-.5-13.100M530.400 276.200v13.100" />
<path d="M554.400 289.300v-13.100h-2.200M551.700 289.300l.5-13.100M553.400 276.200v13.100" />
<path d="M530 289.300h24.400M530 289.300v5.400M554.400 289.300v5.400"/>
<path d="M530 294.700c3 .6 6 .9 10.800.9M554.400 294.700c-3 .6-6 .9-11.400.9M530.600 296.200c3 .5 6 .7 10.200.7M554 296.200c-3 .5-6 .7-11 .7" stroke-width="0.800"/>
<path d="M540.800 289.300v12M543 289.300v12"/>
<path d="M529.400 305.300l11.400-4h2.200l11.400 4z" />
<path d="M529.400 305.300l12.500-2.400 12.500 2.400M541.900 301.300v4M535 303.400l6.900 1.900 6.900-1.900" stroke-width="0.500"/>
<path d="M529.400 305.300h25" stroke-width="0.900"/>
</g>
<!-- 19: shampoo unit side -->
<g>
<path d="M413.900 354.900l5.900 2.700h21.200l-3.300 7.900v5.300l-7.300 11.200h-13.200"/>
<path d="M413.900 354.900l-.6.800 5.800 6.800"/>
<path d="M425.200 365.500h12.500"/>
<path d="M419.100 362.500c2.200-1.700 5-.8 6 1.700 1.100 2.700-.2 5.600-3 6.100-1.600.3-2.800.1-3.700-.3"/>
<rect x="416.500" y="382" width="12.600" height="13.900"/>
<path d="M418.400 370c-1.800 3.500-2.600 7.500-2.300 12 .3 5 .8 9.500 1.800 13.900" />
<path d="M417.400 371c-1.600 3.300-2.200 7-2 11" stroke-width="0.400"/>
<path d="M407.300 377.400l11.800-14.900M410.600 369.400l8.500-6.900"/>
<path d="M388.100 374.700c.7-3.600 2.600-6.200 5.400-7.800 3.200-1.800 7-2 10.500-1 2.500.7 4.800 1.900 6.600 3.500"/>
<path d="M389.200 375c.7-3.200 2.400-5.500 4.900-7 3-1.700 6.400-1.800 9.600-.9 2.300.7 4.300 1.700 5.900 3.100" />
<path d="M386.800 376.700c7-.800 14-.5 20.500.7"/>
<path d="M386.800 376.700c-.2 4 .3 8 1.300 11.900l28.400-5.900"/>
<path d="M372.300 385.300l6.600-3.300 1.200 1-6.500 3.600z" fill="#888"/>
<path d="M373.600 386.600l12.500 1.600M378.900 382l7.800 4.500M375 385l11 2.200" stroke-width="0.700"/>
<path d="M388.100 388.600l1.300 1-0.600 6.300" stroke-width="0.800"/>
</g>
<!-- 20: barber chair front 2 -->
<g>
<ellipse cx="483.900" cy="348.600" rx="5.300" ry="2.600"/>
<path d="M479 349.400c-2-.3-3.600-.1-4.600.9-.9.900-1 2.100-.7 3.500l3.900 11.500c.2.500.5.700 1 .7h10.600c.5 0 .8-.2 1-.7l3.900-11.500c.3-1.400.2-2.600-.7-3.500-1-1-2.600-1.200-4.600-.9"/>
<path d="M481.500 365.300l1-.9h2.800l1 .9" stroke-width="0.400"/>
<path d="M474.500 358.700c-1.600-1-3.700-.7-4.700.8-.8 1.200-.6 2.600.1 3.700l2.600 6.500c.3.700.8 1 1.500 1M473.700 360c-1.100-.6-2.300-.4-2.900.5-.5.800-.3 1.700.2 2.500l2.500 6.200" />
<path d="M493.300 358.700c1.600-1 3.700-.7 4.700.8.800 1.200.6 2.600-.1 3.700l-2.600 6.500c-.3.700-.8 1-1.500 1M494.100 360c1.100-.6 2.300-.4 2.900.5.500.8.300 1.700-.2 2.500l-2.500 6.200" />
<path d="M473.700 366.500h20.400M473.700 366.500c-.2 1.500 0 3 .6 4.500h19.200c.6-1.500.8-3 .6-4.500"/>
<path d="M474.300 371h19.200" stroke-width="0.900"/>
<ellipse cx="475.600" cy="372.500" rx="4.600" ry="0.900"/>
<path d="M480 372.500h3"/>
<path d="M480.800 371.700l1 2h4.200l1-2"/>
<path d="M481.800 373.700v9M486 373.700v9"/>
<path d="M476 387v-4.600h5.800M491.700 387v-4.600H486M477.200 387v-3.400M490.500 387v-3.400"/>
<path d="M469.300 390.600l7-3.600h15.400l6.800 3.600z" stroke-width="0.500"/><path d="M472 390.400l6-2.600h11.800l6 2.600" stroke-width="0.450"/>
<path d="M469.300 390.700h29.200" stroke-width="0.900"/>
<path d="M476 387h15.800M473 388.800h22" stroke-width="0.500"/>
</g>
<!-- 21: barber chair side 2 -->
<g>
<path d="M550.300 368.400c1.300-.6 2.200-1.600 2.600-3.200l4.200-15.300-1.500-.4-3.700 13.400c-.5 2-1 3.700-1.600 5.500"/>
<path d="M555.600 349.500l.9-2.900 1.400.4-.8 2.900" stroke-width="0.700"/>
<path d="M529.200 367.100h21.800v2.600h-21.800z"/>
<path d="M535.100 367.100v-5c0-1.700.7-2.500 2-2.700M544.400 367.100v-5c0-1.700-.7-2.500-2-2.700M537 360.600v-1.800h5.500v1.800"/>
<ellipse cx="539.750" cy="360.900" rx="3.300" ry="1"/>
<path d="M536 369.700l1.800 2h5.600l3-2"/>
<path d="M539.100 371.700v15.900M543.100 371.700v15.900M539.100 376.500h4M539.100 378h4" />
<path d="M537.500 370.500c-2.700 2.400-4.400 5.100-6 8-1.600 2.800-3.800 4.400-7 4.700-2.300.2-4.500-.2-6.500-.9"/>
<path d="M538.700 370.900c-2.700 2.400-4.400 5.100-6 8-1.800 3.200-4.400 5-8 5.300-2.400.2-4.700-.3-6.700-1.200"/>
<path d="M543.100 381h2.800c1.500 0 2.200-.900 2-2.400" stroke-width="0.900"/>
<path d="M529.500 390.800c2.500-2 5.600-3.200 9.600-3.200h3.800c4 0 7.100 1.200 9.600 3.200z" />
<path d="M527.500 390.900h26" stroke-width="0.900"/>
<path d="M535 389h11.800" stroke-width="0.400"/>
</g>
<!-- /DRAW2 -->
</svg>
<!-- /DRAWINGS -->

<!-- MASCOT -->
<svg class="abs" style="left:645px;top:73px;" width="135" height="127" viewBox="645 73 135 127" stroke-linejoin="round" stroke-linecap="round">
<!-- legs -->
<path d="M708.500 145.500l-8 5.500-7 9 5 5 7.500-7.500 11-5.500z" fill="#1f78d8" stroke="#0c3a78" stroke-width="0.800"/>
<path d="M717.500 147l5.500 8 3 9.500 6-1.500-2.500-11-4-8z" fill="#1f78d8" stroke="#0c3a78" stroke-width="0.800"/>
<path d="M692 162l3.500-4 5.500 4.500-2 4-6 1.500c-2-.5-2.500-4-1-6z" fill="#134a94" stroke="#0a2c5c" stroke-width="0.700"/>
<path d="M726.500 163.500l6-1.800 2.700 6-.8 2.300-5.400-.5z" fill="#134a94" stroke="#0a2c5c" stroke-width="0.700"/>
<!-- torso -->
<path d="M706.500 127.500c4.500-2.800 14-3.200 20.500-1l4 6.500-2.500 8.500 1 7.500c-6.500 3.200-15.500 3.200-22.500 0l1.500-8z" fill="#1f78d8" stroke="#0c3a78" stroke-width="0.800"/>
<path d="M715.500 127.500l1.500 21.500M718 127.500l1.500 21.500" stroke="#0c3a78" stroke-width="0.600" fill="none"/>
<path d="M711.500 126.500l5 5.500 4.500-5.500" fill="#134a94" stroke="#0c3a78" stroke-width="0.600"/>
<path d="M707.500 146.500c6 1.800 15 1.800 21.500 0" stroke="#0c3a78" stroke-width="0.800" fill="none"/>
<!-- left arm (viewer left) -->
<path d="M708 127.800c-4.500 1-9.500 5.500-14 9.500l3 4.200c5-2.500 9.500-5.200 13.500-8.500z" fill="#1f78d8" stroke="#0c3a78" stroke-width="0.800"/>
<!-- right arm raised -->
<path d="M725.500 127c4.500-1 8.500-4 11-7.500l3.500 3c-2 5.500-6.500 9.500-11.500 12z" fill="#1f78d8" stroke="#0c3a78" stroke-width="0.800"/>
<!-- staff -->
<path d="M677.500 144L752 115.800" stroke="#5a3210" stroke-width="2.900" fill="none"/>
<path d="M677.500 143.800L752 115.600" stroke="#b9772e" stroke-width="1.500" fill="none"/>
<!-- hands -->
<ellipse cx="695.500" cy="138" rx="2.600" ry="2.200" fill="#f2b27a" stroke="#6a3a1a" stroke-width="0.600"/>
<ellipse cx="737.300" cy="121.300" rx="2.700" ry="2.400" fill="#f2b27a" stroke="#6a3a1a" stroke-width="0.600"/>
<!-- mop head -->
<path d="M748 104.500l3.500-3c4.500 1 7.500 3.500 9.500 7.500l-.3 18c-.8 2.200-1.800 1.200-2-1l-.5-6c-1.500 0-2.200-1-2.500-3-2 .3-3.500-1-3.700-3-2.200-1-3.500-4.500-4-9.500z" fill="#f6bd1c" stroke="#a86a10" stroke-width="0.700"/>
<path d="M751.500 102c2.500 3 4.500 7 5 12M754.500 103.500c2 3 3.500 7 4 12" stroke="#e08f14" stroke-width="0.800" fill="none"/>
<!-- head -->
<path d="M699.500 104c-1 8.500 1 15.500 6 19.500 4 3.200 9.500 3.800 14 1.800 6.500-2.800 12.500-9.500 14-18z" fill="#f4b57c" stroke="#6a3a1a" stroke-width="0.700"/>
<ellipse cx="733.400" cy="111.500" rx="2" ry="2.800" fill="#f4b57c" stroke="#6a3a1a" stroke-width="0.600"/>
<!-- eyes -->
<ellipse cx="707.800" cy="109.800" rx="3.300" ry="2.500" fill="#fff" stroke="#2a1a0a" stroke-width="0.600"/>
<ellipse cx="721.200" cy="109.800" rx="3.500" ry="2.500" fill="#fff" stroke="#2a1a0a" stroke-width="0.600"/>
<circle cx="708.600" cy="110.200" r="1.800" fill="#3f78b8"/><circle cx="720.600" cy="110.200" r="1.800" fill="#3f78b8"/>
<circle cx="708.600" cy="110.200" r="0.900" fill="#111"/><circle cx="720.600" cy="110.200" r="0.900" fill="#111"/>
<path d="M704 107.300l6.500 1.200M717.500 108.500l7-1.400" stroke="#3a220e" stroke-width="1.200" fill="none"/>
<path d="M709 118c3.200 2.800 8.500 2.800 12-1" stroke="#5a2a12" stroke-width="0.900" fill="none"/>
<path d="M713.500 114.300l1.800 1" stroke="#8a4a22" stroke-width="0.600" fill="none"/>
<!-- hair -->
<path d="M700 99.500c-.5-5 1-9.500 3-13l1 3.500c1.500-4 4-7.500 7.500-9.500l-.5 3.500c3-3 7-4.500 11-4.500l-2 2.500c4.500 0 8.500 2 11 5.500l-3-.3c3 2.500 5.500 7 6 12.300z" fill="#f8c21c" stroke="#9a5f0e" stroke-width="0.700"/>
<path d="M705.500 98c1-5.500 3.500-10 7.500-13M712 98c1.500-6 4.500-10.500 9.500-13.500M719.500 98.500c2-4.500 5-8 9-10M726.500 99c1.500-3 3.500-5 6-6.500" stroke="#ec8f14" stroke-width="1.500" fill="none"/>
<!-- headband -->
<path d="M699 98.800c10.500-3 24.500-3 35.500 0l.3 7.500c-11.500-3-24.500-3-35.800.300z" fill="#38383a" stroke="#121214" stroke-width="0.700"/>
<path d="M734 100.800c3.200-2.800 7-3.300 10.200-2.200-1.500 1-2.500 2.200-3 3.700 2.200 1.500 3 4.800 2.200 8-1.500-3.200-4.800-5.800-8.800-6.300z" fill="#222224" stroke="#0c0c0e" stroke-width="0.700"/>
<defs><linearGradient id="gTxt" gradientUnits="userSpaceOnUse" x1="0" y1="166" x2="0" y2="193"><stop offset="0" stop-color="#2b86de"/><stop offset="1" stop-color="#6fbcf2"/></linearGradient></defs>
<g font-family="Liberation Sans, DejaVu Sans, sans-serif" font-style="italic" fill="url(#gTxt)" stroke="url(#gTxt)" stroke-width="0.800" stroke-linejoin="round">
<text x="655" y="184" font-size="24" transform="rotate(4 660 180)">P</text>
<text x="668.200 672.600 682.800 688.600 693.200" y="187.600 188.400 188.600 189.400 190.800" font-size="16">islik</text>
<text x="708" y="191.400" font-size="24" textLength="20.500" lengthAdjust="spacingAndGlyphs" transform="rotate(-2 718 186)">M</text>
<text x="730.200" y="190.400" font-size="16.500">i</text>
<text x="734.600" y="190.200" font-size="17.500" textLength="16" lengthAdjust="spacingAndGlyphs" transform="rotate(-5 742 186)">m</text>
<text x="751.600" y="187.600" font-size="18" textLength="12" lengthAdjust="spacingAndGlyphs" transform="rotate(-10 757 183)">a</text>
<text x="765.400" y="184.800" font-size="22" textLength="10.500" lengthAdjust="spacingAndGlyphs" transform="rotate(-18 770 179)">r</text>
</g>
</svg>
<!-- /MASCOT -->

<!-- DWGICON -->
<svg class="abs" style="left:0;top:322px;" width="80" height="86" viewBox="0 322 80 86">
<defs>
<linearGradient id="gBlue" x1="0" y1="0" x2="1" y2="1"><stop offset="0" stop-color="#27558f"/><stop offset="0.5" stop-color="#1a4173"/><stop offset="1" stop-color="#14325b"/></linearGradient>
<linearGradient id="gYel" x1="0" y1="0" x2="0.6" y2="1"><stop offset="0" stop-color="#f0c313"/><stop offset="0.55" stop-color="#f5d437"/><stop offset="1" stop-color="#faeb9a"/></linearGradient>
<linearGradient id="gFold" x1="0" y1="1" x2="1" y2="0"><stop offset="0" stop-color="#0f2c55"/><stop offset="1" stop-color="#2a5a98"/></linearGradient>
</defs>
<path d="M7.600 329.600H45.500C53 331 63 341 64.600 350V403.200H7.600z" fill="url(#gBlue)"/>
<path d="M7.600 369.100L64.600 382.200V403.200H7.600z" fill="url(#gYel)"/>
<path d="M45.500 329.600c3 3 4.500 9 4.200 14.400c5.500-.8 11 1.500 14.900 6c-2-8-10-17-19.100-20.400z" fill="url(#gFold)"/>
<rect x="23.200" y="329.600" width="1.900" height="39.800" fill="#f2f5fa"/>
<rect x="7.600" y="353" width="57" height="1.900" fill="#f2f5fa"/>
<rect x="17.500" y="347" width="13.600" height="13.600" fill="#1a4173" stroke="#f2f5fa" stroke-width="1.500"/>
<rect x="23.600" y="353.200" width="1.300" height="1.300" fill="#f2f5fa"/>
<text x="22.600" y="399.300" font-family="Liberation Sans, sans-serif" font-weight="bold" font-size="17.600" fill="#0a0a0a" stroke="#0a0a0a" stroke-width="0.500" letter-spacing="0.100">.dwg</text>
</svg>
<!-- /DWGICON -->

</div>
</body>
</html>
